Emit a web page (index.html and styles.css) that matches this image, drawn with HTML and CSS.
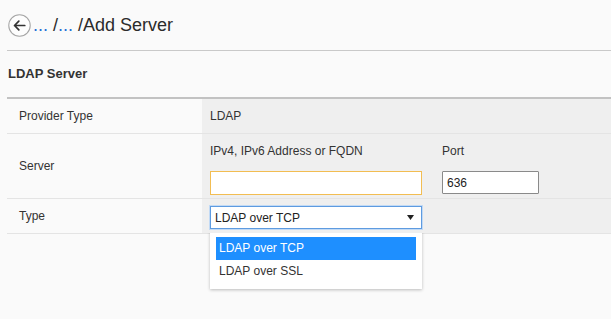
FILE: index.html
```html
<!DOCTYPE html>
<html lang="en">
	<head>
		<meta charset="UTF-8" />
		<meta name="viewport" content="width=device-width, initial-scale=1.0" />
		<title>Add Server</title>
		<link rel="stylesheet" href="styles.css">
	</head>
	<body>
		<div class="topbar">
			<svg class="back" width="23" height="23" viewBox="0 0 24 24">
				<circle cx="12" cy="12" r="11.2" fill="#fdfdfd" stroke="#a6a6a6" stroke-width="1.1" />
				<path d="M17.5 12H6.8 M11.3 7.5 L6.8 12 L11.3 16.5" fill="none" stroke="#333" stroke-width="1.8" stroke-linecap="round" stroke-linejoin="round" />
			</svg>
			<div class="crumbs"><a href="#">...</a> /<a href="#">...</a> /Add Server</div>
		</div>

		<div class="page">
			<div class="section-title">LDAP Server</div>

			<div class="form">
				<div class="row">
					<div class="label">Provider Type</div>
					<div class="value">LDAP</div>
				</div>
				<div class="row row-tall">
					<div class="label">Server</div>
					<div class="value fields">
						<div class="field">
							<div class="field-label">IPv4, IPv6 Address or FQDN</div>
							<input type="text" class="input input-host" />
						</div>
						<div class="field">
							<div class="field-label">Port</div>
							<input type="text" class="input input-port" value="636" />
						</div>
					</div>
				</div>
				<div class="row">
					<div class="label">Type</div>
					<div class="value value-top">
						<div class="type-box">
							<span>LDAP over TCP</span>
							<svg width="7" height="5" viewBox="0 0 7 5"><path d="M0 0H7L3.5 5Z" fill="#222" /></svg>
						</div>
					</div>
				</div>
			</div>

			<!-- open list of the Type field, drawn under the row -->
			<div class="type-list-row">
				<div class="type-list">
					<div class="type-item type-item-on">LDAP over TCP</div>
					<div class="type-item">LDAP over SSL</div>
				</div>
			</div>
		</div>
	</body>
</html>
```

FILE: styles.css
```css
body {
	margin: 0;
	font-family: 'Liberation Sans', Arial, sans-serif;
	font-size: 12px;
	color: #333;
	background-color: #fafafa;
}
.topbar {
	height: 50px;
	display: flex;
	align-items: center;
	padding-left: 8px;
}
.back {
	display: block;
	margin-right: 2px;
}
.crumbs {
	font-size: 18px;
	color: #2b2b2b;
	white-space: nowrap;
}
.crumbs a {
	color: #1f6fd6;
	text-decoration: none;
}
.page {
	margin-left: 7px;
}
.section-title {
	border-top: 1px solid #c9c9c9;
	border-bottom: 2px solid #c2c2c2;
	height: 46px;
	line-height: 46px;
	padding-left: 1px;
	font-size: 13px;
	font-weight: bold;
	color: #333;
}
.row {
	display: grid;
	grid-template-columns: 195px 1fr;
	height: 34px;
	border-bottom: 1px solid #e4e4e4;
}
.row-tall {
	height: 64px;
}
.label {
	display: flex;
	align-items: center;
	padding-left: 12px;
}
.value {
	display: flex;
	align-items: center;
	padding-left: 8px;
	background-color: #efefef;
}
.value-top {
	align-items: flex-start;
	padding-top: 7px;
}
.fields {
	align-items: flex-start;
	padding-top: 9px;
	gap: 20px;
}
.field-label {
	line-height: 16px;
	margin-bottom: 12px;
}
.input {
	display: block;
	box-sizing: border-box;
	margin: 0;
	padding: 0 4px;
	font-family: inherit;
	font-size: 12px;
	color: #222;
	background-color: #fff;
	outline: none;
}
.input-host {
	width: 212px;
	height: 24px;
	border: 1px solid #f2bd52;
}
.input-port {
	width: 97px;
	height: 23px;
	border: 1px solid #8a8a8a;
	border-radius: 1px;
}
.type-box {
	box-sizing: border-box;
	width: 212px;
	height: 23px;
	display: flex;
	align-items: center;
	justify-content: space-between;
	padding: 0 7px 0 4px;
	background-color: #fff;
	border: 1px solid #5e9be0;
	box-shadow: 0 0 0 1px #c2daf5;
	color: #222;
}
.type-list-row {
	margin-top: -3px;
	padding-left: 203px;
	padding-bottom: 30px;
}
.type-list {
	width: 212px;
	box-sizing: border-box;
	padding: 6px;
	background-color: #fff;
	box-shadow: 0 1px 3px rgba(0, 0, 0, 0.25);
}
.type-item {
	height: 23px;
	line-height: 23px;
	padding-left: 3px;
	color: #333;
}
.type-item-on {
	background-color: #1e8fff;
	color: #fff;
}
```
